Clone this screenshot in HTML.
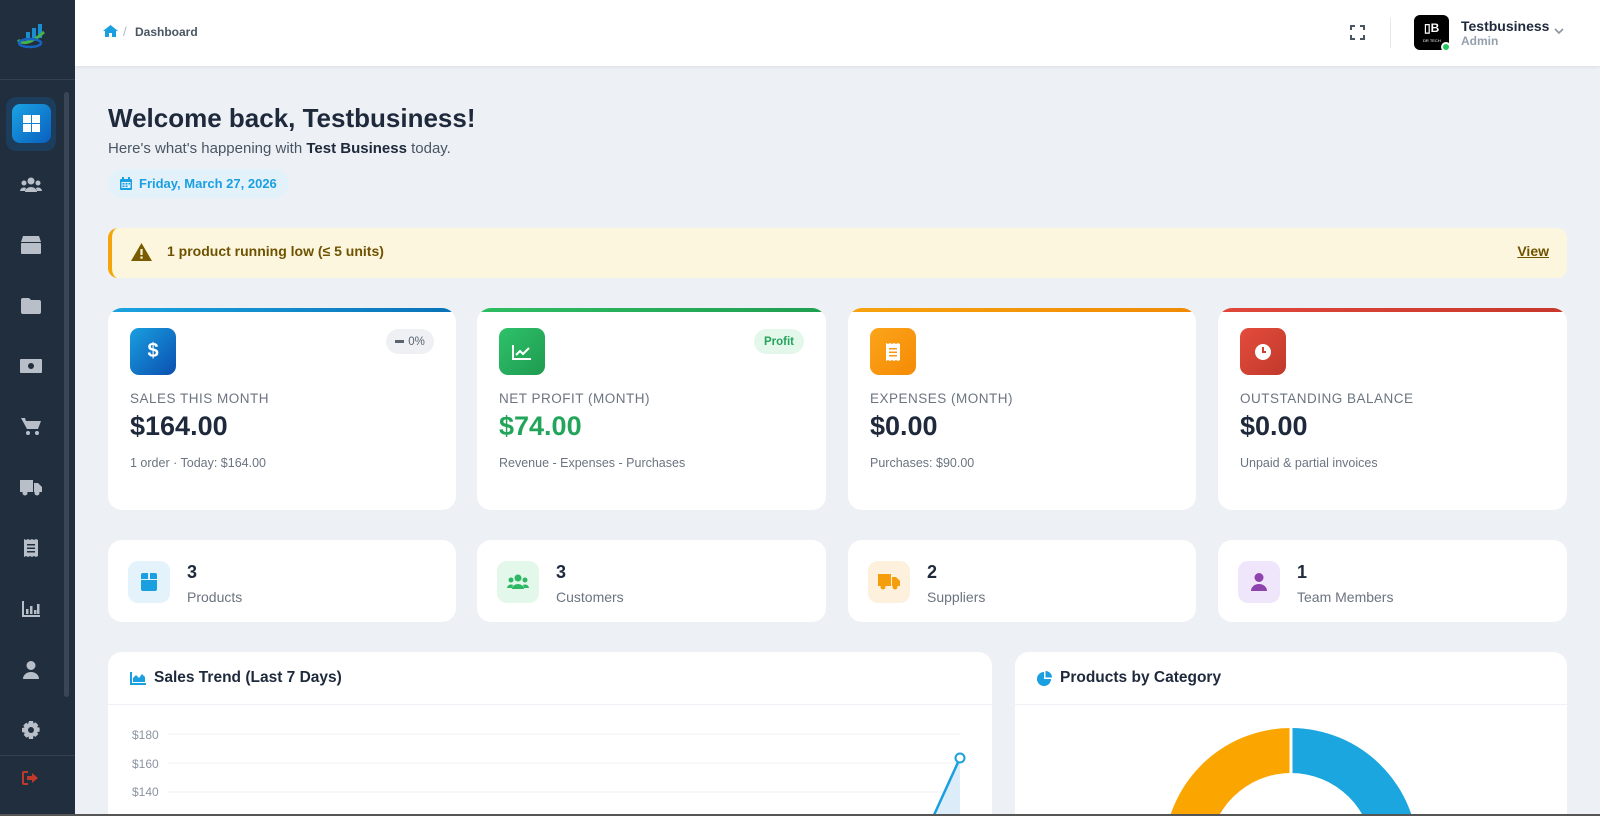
<!DOCTYPE html>
<html style="width:1600px;height:816px;overflow:hidden"><head><meta charset="utf-8"><style>
*{box-sizing:border-box;margin:0;padding:0}
body{width:1600px;height:816px;overflow:hidden;background:#edf1f5;font-family:"Liberation Sans",sans-serif;position:relative;color:#1e293b}
.sb{position:absolute;left:0;top:0;width:75px;height:816px;background:#212e3e;z-index:2}
.sb .ic{position:absolute;left:0;width:62px;display:flex;justify-content:center;align-items:center;height:30px}
.hdr{position:absolute;left:75px;top:0;right:0;height:66px;background:#fff;box-shadow:0 1px 4px rgba(0,0,0,.08)}
.card{position:absolute;background:#fff;border-radius:14px;overflow:hidden}
.stat .bar{position:absolute;left:0;top:0;right:0;height:4px}
.stat .ib{position:absolute;left:22px;top:20px;width:46px;height:47px;border-radius:9px;display:flex;align-items:center;justify-content:center}
.stat .lbl{position:absolute;left:22px;top:83px;font-size:13.5px;letter-spacing:.5px;color:#6b7480}
.stat .val{position:absolute;left:22px;top:103px;font-size:27px;font-weight:bold;color:#1e293b}
.stat .sub{position:absolute;left:22px;top:148px;font-size:12.5px;color:#6b7480}
.sm .ib{position:absolute;left:20px;top:21px;width:42px;height:42px;border-radius:10px;display:flex;align-items:center;justify-content:center}
.sm .n{position:absolute;left:79px;top:22px;font-size:18px;font-weight:bold}
.sm .t{position:absolute;left:79px;top:49px;font-size:14px;color:#6b7480}
.ch .h{height:53px;border-bottom:1px solid #eef1f5;display:flex;align-items:center;padding-left:22px;font-size:15.5px;font-weight:bold;color:#1e293b;gap:8px}
</style></head><body>
<div class="sb">
  <svg style="position:absolute;left:16px;top:20px" width="32" height="30" viewBox="0 0 32 30"><rect x="10" y="12" width="4" height="10" fill="#1a8fd0"/><rect x="16" y="8" width="4" height="12" fill="#1a8fd0"/><rect x="22" y="4" width="4" height="14" fill="#1a8fd0"/><path d="M2 20 Q10 28 28 12" stroke="#46b04a" stroke-width="3" fill="none"/><ellipse cx="14" cy="23" rx="11" ry="4" fill="none" stroke="#1565c0" stroke-width="2.5"/></svg>
  <div style="position:absolute;left:0;top:79px;width:75px;height:1px;background:#34404f"></div>
  <div style="position:absolute;left:64px;top:92px;width:5px;height:605px;border-radius:3px;background:#3a4656"></div>
  <div style="position:absolute;left:6px;top:97px;width:50px;height:54px;border-radius:10px;background:#1c3d5c"></div>
  <div style="position:absolute;left:12px;top:104px;width:39px;height:39px;border-radius:8px;background:linear-gradient(135deg,#1ba3e3,#0a5fbf);display:flex;align-items:center;justify-content:center"><svg width="17" height="17"><rect x="0" y="0" width="8" height="8" fill="#fff"/><rect x="9" y="0" width="8" height="8" fill="#fff"/><rect x="0" y="9" width="8" height="8" fill="#fff"/><rect x="9" y="9" width="8" height="8" fill="#fff"/></svg></div>
  <div class="ic" style="top:170px"><svg width="22" height="16" fill="#b8bfc8"><circle cx="11" cy="4" r="3.5"/><circle cx="4" cy="6" r="2.5"/><circle cx="18" cy="6" r="2.5"/><path d="M5 15a6 5 0 0 1 12 0z"/><path d="M0 14a4 4 0 0 1 6-3l-1 3z M22 14a4 4 0 0 0-6-3l1 3z"/></svg></div>
  <div class="ic" style="top:230px"><svg width="20" height="18" fill="#b8bfc8"><path d="M2 0h16l2 6H0z"/><rect y="7" width="20" height="11" rx="1"/></svg></div>
  <div class="ic" style="top:291px"><svg width="20" height="16" fill="#b8bfc8"><path d="M0 2a2 2 0 0 1 2-2h6l2 2h8a2 2 0 0 1 2 2v10a2 2 0 0 1-2 2H2a2 2 0 0 1-2-2z"/></svg></div>
  <div class="ic" style="top:351px"><svg width="22" height="14" fill="#b8bfc8"><rect width="22" height="14" rx="1"/><circle cx="11" cy="7" r="3" fill="#212e3e"/></svg></div>
  <div class="ic" style="top:412px"><svg width="20" height="18" fill="#b8bfc8"><path d="M0 0h4l1 3h15l-3 8H6z"/><circle cx="7" cy="15" r="2"/><circle cx="16" cy="15" r="2"/></svg></div>
  <div class="ic" style="top:473px"><svg width="22" height="16" fill="#b8bfc8"><rect width="13" height="12"/><path d="M14 3h4l4 4v5h-8z"/><circle cx="5" cy="13" r="2.5"/><circle cx="17" cy="13" r="2.5"/></svg></div>
  <div class="ic" style="top:533px"><svg width="14" height="18" fill="#b8bfc8"><path d="M0 0l2 1 2-1 2 1 2-1 2 1 2-1 2 1v16l-2 1-2-1-2 1-2-1-2 1-2-1-2 1z"/><rect x="3" y="5" width="8" height="1.5" fill="#212e3e"/><rect x="3" y="8.5" width="8" height="1.5" fill="#212e3e"/><rect x="3" y="12" width="8" height="1.5" fill="#212e3e"/></svg></div>
  <div class="ic" style="top:594px"><svg width="18" height="16" fill="#b8bfc8"><path d="M0 0h2v14h16v2H0z"/><rect x="4" y="8" width="2.5" height="5"/><rect x="8" y="5" width="2.5" height="8"/><rect x="12" y="9" width="2.5" height="4"/><rect x="15" y="3" width="2.5" height="10"/></svg></div>
  <div class="ic" style="top:655px"><svg width="16" height="18" fill="#b8bfc8"><circle cx="8" cy="4.5" r="4.5"/><path d="M0 18a8 7 0 0 1 16 0z"/></svg></div>
  <div class="ic" style="top:715px"><svg width="18" height="18" viewBox="0 0 18 18" fill="#b8bfc8"><path d="M7 0h4l.5 2.5 2-1.2 2.8 2.8-1.2 2 2.5.5v4l-2.5.5 1.2 2-2.8 2.8-2-1.2L11 18H7l-.5-2.5-2 1.2-2.8-2.8 1.2-2L0 11V7l2.5-.5-1.2-2 2.8-2.8 2 1.2z"/><circle cx="9" cy="9" r="3" fill="#212e3e"/></svg></div>
  <div style="position:absolute;left:0;top:755px;width:75px;height:1px;background:#34404f"></div>
  <div class="ic" style="top:763px"><svg width="18" height="14" fill="#c0392b"><path d="M6 0H2a2 2 0 0 0-2 2v10a2 2 0 0 0 2 2h4v-2H2V2h4z"/><path d="M10 2l6 5-6 5V9H5V5h5z"/></svg></div>
</div>
<div class="hdr">
  <svg style="position:absolute;left:28px;top:25px" width="15" height="12" viewBox="0 0 15 12" fill="#1a9fe0"><path d="M7.5 0L0 6h2v6h4V8h3v4h4V6h2z"/></svg>
  <span style="position:absolute;left:48px;top:24px;font-size:13px;color:#b0b8c2">/</span>
  <span style="position:absolute;left:60px;top:25px;font-size:12px;font-weight:bold;color:#4a5563">Dashboard</span>
  <svg style="position:absolute;left:1275px;top:25px" width="15" height="15" fill="none" stroke="#4a5563" stroke-width="2"><path d="M1 5V1h4M10 1h4v4M14 10v4h-4M5 14H1v-4"/></svg>
  <div style="position:absolute;left:1315px;top:18px;width:1px;height:30px;background:#e5e8ec"></div>
  <div style="position:absolute;left:1339px;top:15px;width:35px;height:35px;border-radius:6px;background:#000"><span style="position:absolute;left:10px;top:6px;color:#fff;font-size:12px;font-weight:bold">▯B</span><span style="position:absolute;left:9px;top:23px;color:#fff;font-size:4px">DR TECH</span></div>
  <div style="position:absolute;left:1366px;top:42px;width:10px;height:10px;border-radius:50%;background:#22c55e;border:2px solid #fff"></div>
  <div style="position:absolute;left:1386px;top:18px;font-size:14px;font-weight:bold;color:#1e293b">Testbusiness</div>
  <div style="position:absolute;left:1386px;top:34px;font-size:12px;font-weight:bold;color:#94a0ad">Admin</div>
  <svg style="position:absolute;left:1479px;top:28px" width="10" height="7" fill="none" stroke="#8a94a0" stroke-width="1.6"><path d="M1 1l4 4 4-4"/></svg>
</div>

<div style="position:absolute;left:108px;top:103px;font-size:26px;font-weight:bold;color:#1e293b">Welcome back, Testbusiness!</div>
<div style="position:absolute;left:108px;top:140px;font-size:15px;color:#4a5563">Here's what's happening with <b style="color:#1e293b">Test Business</b> today.</div>
<div style="position:absolute;left:108px;top:169px;width:181px;height:29px;border-radius:15px;background:#e3f1fb;display:flex;align-items:center;padding-left:12px;gap:7px;font-size:13px;font-weight:bold;color:#1a9fe0"><svg width="12" height="13" fill="#1a9fe0"><rect y="2" width="12" height="11" rx="1"/><rect x="2" y="0" width="2" height="3"/><rect x="8" y="0" width="2" height="3"/><rect x="1.5" y="5" width="9" height="6" fill="#e3f1fb"/><rect x="2.5" y="6" width="2" height="1.6"/><rect x="5.5" y="6" width="2" height="1.6"/><rect x="8.5" y="6" width="1.5" height="1.6"/><rect x="2.5" y="8.5" width="2" height="1.6"/><rect x="5.5" y="8.5" width="2" height="1.6"/></svg>Friday, March 27, 2026</div>

<div style="position:absolute;left:108px;top:228px;width:1459px;height:50px;border-radius:10px;background:#fdf6de;border-left:4px solid #f5a50a">
  <svg style="position:absolute;left:19px;top:15px" width="21" height="18" viewBox="0 0 21 18"><path d="M10.5 0L21 18H0z" fill="#7a5c00"/><rect x="9.4" y="6" width="2.2" height="6" fill="#fdf6de"/><rect x="9.4" y="13.5" width="2.2" height="2.2" fill="#fdf6de"/></svg>
  <span style="position:absolute;left:55px;top:15px;font-size:14px;font-weight:bold;color:#6e5200">1 product running low (≤ 5 units)</span>
  <span style="position:absolute;right:18px;top:15px;font-size:14px;font-weight:bold;color:#6e5200;text-decoration:underline">View</span>
</div>

<div class="card stat" style="left:108px;top:308px;width:348px;height:202px"><div class="bar" style="background:linear-gradient(90deg,#1aa3e0,#0a72b8)"></div>
<div class="ib" style="background:linear-gradient(135deg,#1a9fe0,#0a4faf)"><span style="color:#fff;font-weight:bold;font-size:20px">$</span></div>
<div style="position:absolute;right:22px;top:21px;width:48px;height:25px;border-radius:13px;background:#eef0f3;font-size:11.5px;color:#5a6470;display:flex;align-items:center;justify-content:center;gap:4px"><span style="width:9px;height:2.5px;background:#5a6470;display:inline-block"></span>0%</div>
<div class="lbl">SALES THIS MONTH</div><div class="val">$164.00</div><div class="sub">1 order · Today: $164.00</div></div>

<div class="card stat" style="left:477px;top:308px;width:349px;height:202px"><div class="bar" style="background:linear-gradient(90deg,#2ebd63,#1f9e50)"></div>
<div class="ib" style="background:linear-gradient(135deg,#2ec26a,#1f9a50)"><svg width="20" height="16" fill="none" stroke="#fff" stroke-width="2"><path d="M1 1v14h18"/><path d="M4 11l4-4 3 3 6-6"/></svg></div>
<div style="position:absolute;right:22px;top:21px;width:50px;height:25px;border-radius:13px;background:#e3f7ea;font-size:11.5px;font-weight:bold;color:#22a55a;display:flex;align-items:center;justify-content:center">Profit</div>
<div class="lbl">NET PROFIT (MONTH)</div><div class="val" style="color:#22a55a">$74.00</div><div class="sub">Revenue - Expenses - Purchases</div></div>

<div class="card stat" style="left:848px;top:308px;width:348px;height:202px"><div class="bar" style="background:linear-gradient(90deg,#f7a20e,#f08a05)"></div>
<div class="ib" style="background:linear-gradient(135deg,#fba51a,#f58a05)"><svg width="14" height="18" fill="#fff"><path d="M0 0l2 1 2-1 2 1 2-1 2 1 2-1 2 1v16l-2 1-2-1-2 1-2-1-2 1-2-1-2 1z"/><rect x="3" y="5" width="8" height="1.5" fill="#f7980f"/><rect x="3" y="8.5" width="8" height="1.5" fill="#f7980f"/><rect x="3" y="12" width="8" height="1.5" fill="#f7980f"/></svg></div>
<div class="lbl">EXPENSES (MONTH)</div><div class="val">$0.00</div><div class="sub">Purchases: $90.00</div></div>

<div class="card stat" style="left:1218px;top:308px;width:349px;height:202px"><div class="bar" style="background:linear-gradient(90deg,#e0473a,#c8372b)"></div>
<div class="ib" style="background:linear-gradient(135deg,#e44c3c,#c0392b)"><svg width="18" height="18"><circle cx="9" cy="9" r="8" fill="#fff"/><path d="M9 4v5h3" stroke="#d0402f" stroke-width="2" fill="none"/></svg></div>
<div class="lbl">OUTSTANDING BALANCE</div><div class="val">$0.00</div><div class="sub">Unpaid &amp; partial invoices</div></div>

<div class="card sm" style="left:108px;top:540px;width:348px;height:82px"><div class="ib" style="background:#e4f2fc"><svg width="16" height="18" fill="#1a9fe0"><path d="M2 0h5v6H0V2a2 2 0 0 1 2-2zM9 0h5a2 2 0 0 1 2 2v4H9zM0 7h16v9a2 2 0 0 1-2 2H2a2 2 0 0 1-2-2z"/></svg></div><div class="n">3</div><div class="t">Products</div></div>
<div class="card sm" style="left:477px;top:540px;width:349px;height:82px"><div class="ib" style="background:#e3f7ea"><svg width="22" height="16" fill="#2eb866"><circle cx="11" cy="4" r="3.5"/><circle cx="4" cy="6" r="2.5"/><circle cx="18" cy="6" r="2.5"/><path d="M5 15a6 5 0 0 1 12 0z"/><path d="M0 14a4 4 0 0 1 6-3l-1 3z M22 14a4 4 0 0 0-6-3l1 3z"/></svg></div><div class="n">3</div><div class="t">Customers</div></div>
<div class="card sm" style="left:848px;top:540px;width:348px;height:82px"><div class="ib" style="background:#fdf0dc"><svg width="22" height="16" fill="#f59e0b"><rect width="13" height="12"/><path d="M14 3h4l4 4v5h-8z"/><circle cx="5" cy="13" r="2.5"/><circle cx="17" cy="13" r="2.5"/></svg></div><div class="n">2</div><div class="t">Suppliers</div></div>
<div class="card sm" style="left:1218px;top:540px;width:349px;height:82px"><div class="ib" style="background:#f0e6fb"><svg width="16" height="18" fill="#8e44ad"><circle cx="8" cy="4.5" r="4.5"/><path d="M0 18a8 7 0 0 1 16 0z"/></svg></div><div class="n">1</div><div class="t">Team Members</div></div>

<div class="card ch" style="left:108px;top:652px;width:884px;height:162px;border-radius:14px 14px 0 0"><div class="h"><svg width="16" height="13" fill="#1a9fe0"><path d="M0 0h2v11h14v2H0z"/><path d="M3 10V6l3-3 3 3 3-4 3 3v5z"/></svg>Sales Trend (Last 7 Days)</div></div>
<svg style="position:absolute;left:108px;top:705px" width="884" height="109">
  <g font-family="Liberation Sans" font-size="12" fill="#8a94a0"><text x="24" y="34">$180</text><text x="24" y="63">$160</text><text x="24" y="91">$140</text></g>
  <g stroke="#eef1f4"><line x1="60" y1="29" x2="852" y2="29"/><line x1="60" y1="58" x2="852" y2="58"/><line x1="60" y1="87" x2="852" y2="87"/></g>
  <path d="M852 53 L826 110 L852 110z" fill="#dcecf8"/>
  <path d="M852 53 L826 110" stroke="#1a9fe0" stroke-width="2.5" fill="none"/>
  <circle cx="852" cy="53" r="4.5" fill="#fff" stroke="#1a9fe0" stroke-width="2"/>
</svg>
<div class="card ch" style="left:1015px;top:652px;width:552px;height:162px;border-radius:14px 14px 0 0"><div class="h"><svg width="15" height="15"><path d="M7 1A7 7 0 1 0 14 8H7z" fill="#1a9fe0"/><path d="M8.5 0v6.5H15A6.5 6.5 0 0 0 8.5 0z" fill="#1a9fe0"/></svg>Products by Category</div></div>
<svg style="position:absolute;left:1015px;top:705px" width="552" height="109">
  <path d="M276 23 A127 127 0 0 1 403 150 L358 150 A82 82 0 0 0 276 68z" fill="#1ca6df"/>
  <path d="M276 23 A127 127 0 0 0 149 150 L194 150 A82 82 0 0 1 276 68z" fill="#fba500"/>
  <line x1="276" y1="20" x2="276" y2="70" stroke="#fff" stroke-width="3"/>
</svg>
<div style="position:absolute;left:0;top:814px;width:1600px;height:2px;background:#555;z-index:3"></div>
</body></html>
